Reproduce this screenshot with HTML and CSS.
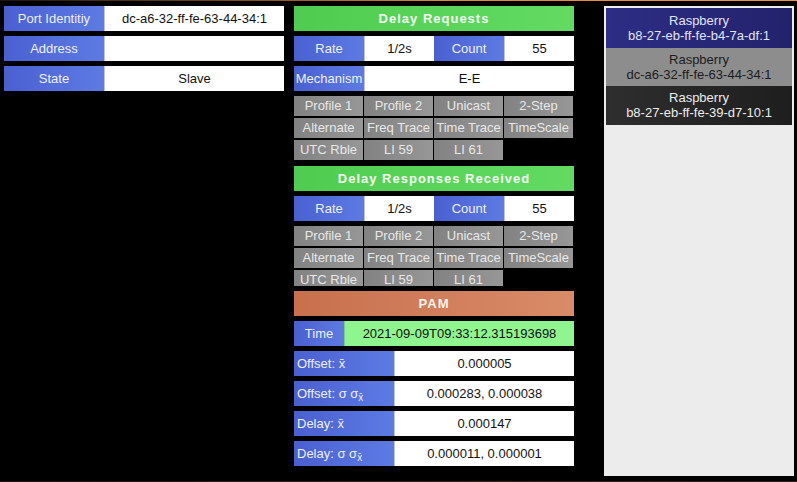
FILE: index.html
```html
<!DOCTYPE html>
<html>
<head>
<meta charset="utf-8">
<link rel="stylesheet" href="styles.css">
</head>
<body>
<div class="topline"></div>
<div class="app">
  <div class="col left">
    <div class="row"><div class="lbl w100">Port Identitiy</div><div class="val">dc-a6-32-ff-fe-63-44-34:1</div></div>
    <div class="row"><div class="lbl w100">Address</div><div class="val"></div></div>
    <div class="row"><div class="lbl w100">State</div><div class="val">Slave</div></div>
  </div>

  <div class="col mid">
    <div class="hdr green">Delay Requests</div>
    <div class="row"><div class="lbl q">Rate</div><div class="val q">1/2s</div><div class="lbl q">Count</div><div class="val q">55</div></div>
    <div class="row"><div class="lbl q">Mechanism</div><div class="val">E-E</div></div>
    <div class="flags first">
      <div class="flag">Profile 1</div><div class="flag">Profile 2</div><div class="flag">Unicast</div><div class="flag">2-Step</div>
      <div class="flag">Alternate</div><div class="flag">Freq Trace</div><div class="flag">Time Trace</div><div class="flag">TimeScale</div>
      <div class="flag">UTC Rble</div><div class="flag">LI 59</div><div class="flag">LI 61</div>
    </div>

    <div class="hdr green">Delay Responses Received</div>
    <div class="row"><div class="lbl q">Rate</div><div class="val q">1/2s</div><div class="lbl q">Count</div><div class="val q">55</div></div>
    <div class="flags clipped">
      <div class="flag">Profile 1</div><div class="flag">Profile 2</div><div class="flag">Unicast</div><div class="flag">2-Step</div>
      <div class="flag">Alternate</div><div class="flag">Freq Trace</div><div class="flag">Time Trace</div><div class="flag">TimeScale</div>
      <div class="flag">UTC Rble</div><div class="flag">LI 59</div><div class="flag">LI 61</div>
    </div>

    <div class="hdr orange">PAM</div>
    <div class="row"><div class="lbl w50">Time</div><div class="val time">2021-09-09T09:33:12.315193698</div></div>
    <div class="row"><div class="lbl w100 left-al">Offset: x&#772;</div><div class="val">0.000005</div></div>
    <div class="row"><div class="lbl w100 left-al">Offset: σ σ<sub>x&#772;</sub></div><div class="val">0.000283, 0.000038</div></div>
    <div class="row"><div class="lbl w100 left-al">Delay: x&#772;</div><div class="val">0.000147</div></div>
    <div class="row"><div class="lbl w100 left-al">Delay: σ σ<sub>x&#772;</sub></div><div class="val">0.000011, 0.000001</div></div>
  </div>

  <div class="panel">
    <div class="item blue"><div>Raspberry</div><div>b8-27-eb-ff-fe-b4-7a-df:1</div></div>
    <div class="item grey"><div>Raspberry</div><div>dc-a6-32-ff-fe-63-44-34:1</div></div>
    <div class="item dark"><div>Raspberry</div><div>b8-27-eb-ff-fe-39-d7-10:1</div></div>
  </div>
</div>
<div class="bottomline"></div>
</body>
</html>
```

FILE: styles.css
```css
html, body {
  margin: 0;
  padding: 0;
  background: #000;
  width: 797px;
  height: 482px;
  overflow: hidden;
  font-family: "Liberation Sans", Arial, sans-serif;
  font-size: 13px;
}

.topline {
  height: 1px;
  background: linear-gradient(to right, #1c140c 0%, #6a4420 25%, #e0883a 55%, #ee9248 100%);
}

.bottomline {
  height: 1px;
  background: linear-gradient(to right, #1a120a, #3a2a18 60%, #2a1c10);
}

.app {
  height: 480px;
  box-sizing: border-box;
  padding: 5px 3px 0 4px;
  display: flex;
  align-items: flex-start;
}

.col {
  display: flex;
  flex-direction: column;
  gap: 5px;
  width: 280px;
}

.left {
  margin-right: 10px;
}

.mid {
  margin-right: 30px;
}

.row {
  display: flex;
  height: 25px;
}

.lbl {
  background: linear-gradient(to right, #4a60d1, #5d7be3);
  color: #eef0ff;
  text-align: center;
  line-height: 25px;
  white-space: nowrap;
  overflow: hidden;
}

.w100 { width: 100px; flex: none; }
.w50 { width: 50px; flex: none; }
.q { width: 70px; flex: none; }

.left-al {
  text-align: left;
  padding-left: 3px;
  box-sizing: border-box;
}

.left-al sub {
  font-size: 10px;
  line-height: 0;
  vertical-align: -3px;
}

.val {
  flex: 1;
  background: #fff;
  color: #111;
  text-align: center;
  line-height: 25px;
  border-left: 1px solid #c4c4c4;
  box-sizing: border-box;
  white-space: nowrap;
}

.val.q {
  flex: none;
}

.val.time {
  background: #8ff58f;
  border-left: 1px solid #7ad07a;
}

.hdr {
  height: 25px;
  line-height: 25px;
  text-align: center;
  color: #f4fff4;
  font-weight: bold;
  letter-spacing: 1px;
}

.green {
  background: linear-gradient(to right, #4fcc4f, #63db63);
}

.orange {
  background: linear-gradient(to right, #c8704e, #d98b68);
  color: #fff4ee;
}

.flags {
  display: grid;
  grid-template-columns: repeat(4, 69px);
  grid-auto-rows: 20px;
  column-gap: 1px;
  row-gap: 2px;
}

.flags.first {
  margin-bottom: 1px;
}

.flags.clipped {
  height: 60px;
  overflow: hidden;
}

.flag {
  background: linear-gradient(to right, #828282, #979797);
  color: #e8e8e8;
  text-align: center;
  line-height: 20px;
  white-space: nowrap;
  overflow: hidden;
}

.panel {
  width: 190px;
  height: 470px;
  box-sizing: border-box;
  padding: 2px;
  background: #ececec;
  display: flex;
  flex-direction: column;
}

.item {
  text-align: center;
  line-height: 15px;
  padding: 4px 0 5px;
}

.item.blue {
  background: linear-gradient(to right, #2d2d85, #22226c);
  color: #e2e4f4;
  padding-top: 5px;
}

.item.grey {
  background: #8d8d8d;
  color: #1c1c1c;
  padding-bottom: 4px;
}

.item.dark {
  background: linear-gradient(to right, #2e2e2e, #1e1e1e);
  color: #ececec;
}
```
